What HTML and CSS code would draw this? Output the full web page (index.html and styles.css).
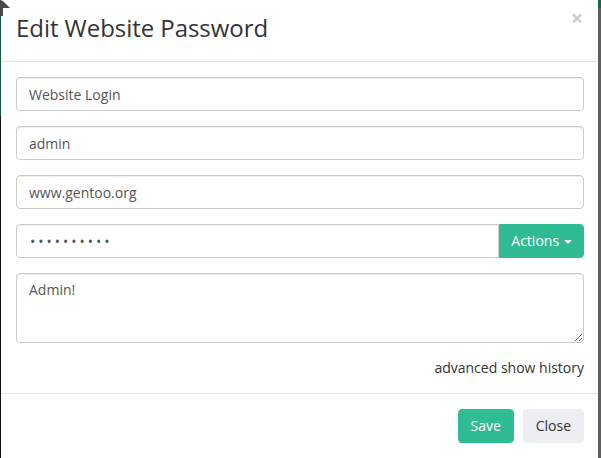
FILE: index.html
```html
<!DOCTYPE html>
<html>
<head>
<meta charset="utf-8">
<link rel="stylesheet" href="styles.css">
</head>
<body>
<svg class="corner" width="12" height="16" viewBox="0 0 12 16"><path d="M0 0 L0 16 L3 16 L3 8 L10 8 L3 1 Z" fill="#4a4a4a"/></svg>
<div class="modal">
  <div class="modal-header">
    <h4 class="modal-title">Edit Website Password</h4>
    <span class="close">×</span>
  </div>
  <div class="modal-body">
    <input class="form-control" type="text" value="Website Login">
    <input class="form-control" type="text" value="admin">
    <input class="form-control" type="text" value="www.gentoo.org">
    <div class="input-group">
      <input class="form-control pw" type="password" value="abcdefghij">
      <button class="btn btn-green actions">Actions <span class="caret"></span></button>
    </div>
    <textarea class="form-control notes">Admin!</textarea>
    <div class="links"><a>advanced</a> <a>show history</a></div>
  </div>
  <div class="modal-footer">
    <button class="btn btn-green save">Save</button>
    <button class="btn btn-light">Close</button>
  </div>
</div>
</body>
</html>
```
FILE: styles.css
```css
* { box-sizing: border-box; }
html, body { margin: 0; height: 100%; }
body {
  font-family: "Open Sans", "Noto Sans", sans-serif;
  font-size: 14px;
  line-height: 20px;
  color: #333;
  background:
    linear-gradient(#0c5a45, #0c5a45) 0 0 / 1px 116px no-repeat,
    linear-gradient(#10684d, #10684d) right 0 top 0 / 3px 8px no-repeat,
    linear-gradient(to right, #151515 0, #151515 50%, #5e5e5e 50%);
  overflow: hidden;
  position: relative;
}
.corner { position: absolute; left: 0; top: 0; z-index: 2; }
.modal {
  margin-left: 1px;
  width: 597px;
  height: 458px;
  background: #fff;
  display: flex;
  flex-direction: column;
}
.modal-header {
  position: relative;
  padding: 12px 15px 18px 15px;
  border-bottom: 1px solid #e5e5e5;
  height: 62px;
}
.modal-title {
  margin: 0;
  font-size: 24px;
  font-weight: 400;
  line-height: 31px;
  color: #333;
  letter-spacing: -0.05px;
}
.close {
  position: absolute;
  right: 15px;
  top: 8px;
  font-size: 21px;
  font-weight: 700;
  line-height: 21px;
  color: #000;
  opacity: .2;
}
.modal-body {
  padding: 15px 14px 15px 15px;
}
.form-control {
  display: block;
  width: 100%;
  height: 34px;
  padding: 6px 12px;
  font-family: inherit;
  font-size: 14px;
  line-height: 20px;
  color: #555;
  background: #fff;
  border: 1px solid #ccc;
  border-radius: 4px;
  box-shadow: inset 0 1px 1px rgba(0,0,0,.075);
  margin: 0 0 15px 0;
}
.input-group {
  display: flex;
  margin-bottom: 15px;
}
.input-group .form-control {
  margin: 0;
  flex: 1;
  border-radius: 4px 0 0 4px;
}
.pw { letter-spacing: 3px; padding-left: 13px; }
.btn {
  font-family: inherit;
  font-size: 14px;
  line-height: 20px;
  padding: 6px 12px;
  border: 1px solid transparent;
  border-radius: 4px;
  height: 34px;
  cursor: pointer;
}
.btn-green {
  background: #2fbb94;
  border-color: #2fbb94;
  color: #fff;
}
.save { width: 56px; padding: 6px 0; }
.btn-light {
  background: #eceef1;
  border-color: #eceef1;
  color: #333;
}
.actions {
  border-radius: 0 4px 4px 0;
  width: 85px;
  padding: 6px 11px;
}
.caret {
  display: inline-block;
  width: 0;
  height: 0;
  margin-left: 1px;
  vertical-align: middle;
  border-top: 4px solid #fff;
  border-left: 4px solid transparent;
  border-right: 4px solid transparent;
}
.notes {
  height: 70px;
  resize: vertical;
}
.links {
  text-align: right;
  color: #333;
  line-height: 20px;
}
.modal-footer {
  border-top: 1px solid #e5e5e5;
  padding: 15px 14px 15px 15px;
  display: flex;
  justify-content: flex-end;
  gap: 9px;
}
```
